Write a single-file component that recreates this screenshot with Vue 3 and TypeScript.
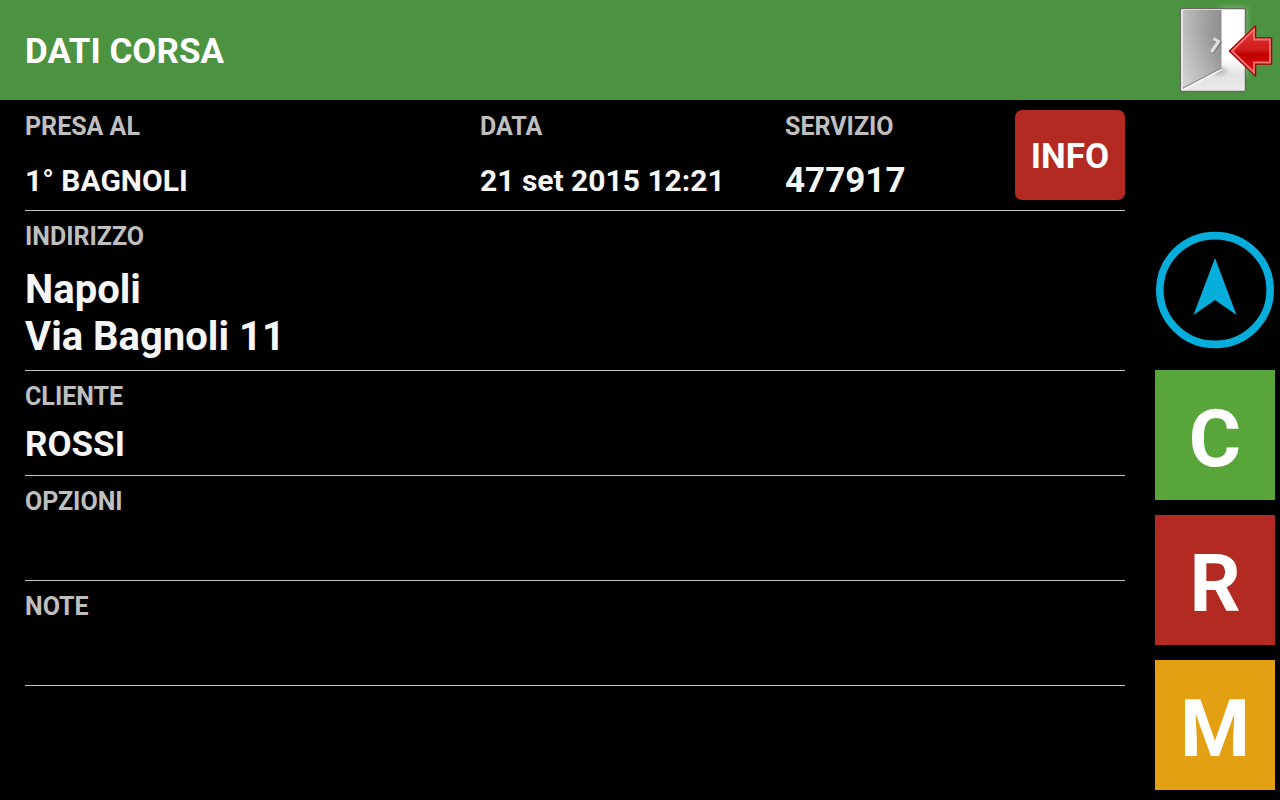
<script setup lang="ts">
interface Section {
  label: string
  lines: string[]
  large?: boolean
}

interface Action {
  letter: string
  tone: string
}

const sections: Section[] = [
  { label: 'INDIRIZZO', lines: ['Napoli', 'Via Bagnoli 11'], large: true },
  { label: 'CLIENTE', lines: ['ROSSI'] },
  { label: 'OPZIONI', lines: [] },
  { label: 'NOTE', lines: [] },
]

const actions: Action[] = [
  { letter: 'C', tone: 'green' },
  { letter: 'R', tone: 'red' },
  { letter: 'M', tone: 'amber' },
]
</script>

<template>
  <div class="screen">
    <header class="bar">
      <h1 class="title">DATI CORSA</h1>
      <button class="exit" type="button" aria-label="Esci">
        <svg width="110" height="100" viewBox="0 0 110 100" aria-hidden="true">
          <defs>
            <linearGradient id="panel" x1="0" y1="0" x2="1" y2="0.1">
              <stop offset="0" stop-color="#c0c0c0" />
              <stop offset="0.5" stop-color="#a6a6a6" />
              <stop offset="1" stop-color="#8e8e8e" />
            </linearGradient>
            <linearGradient id="panelLight" x1="0.6" y1="0" x2="0.4" y2="1">
              <stop offset="0.3" stop-color="#fff" stop-opacity="0" />
              <stop offset="1" stop-color="#fff" stop-opacity="0.35" />
            </linearGradient>
            <linearGradient id="floor" x1="0" y1="0" x2="0" y2="1">
              <stop offset="0.6" stop-color="#fff" />
              <stop offset="0.8" stop-color="#e2e2e2" />
              <stop offset="1" stop-color="#ececec" />
            </linearGradient>
            <radialGradient id="shade" cx="0.5" cy="0.5" r="0.5">
              <stop offset="0" stop-color="#8a8a8a" stop-opacity="0.75" />
              <stop offset="1" stop-color="#bbb" stop-opacity="0" />
            </radialGradient>
            <linearGradient id="arrow" x1="0" y1="0" x2="0" y2="1">
              <stop offset="0" stop-color="#e23a3a" />
              <stop offset="0.48" stop-color="#cf1c1c" />
              <stop offset="0.56" stop-color="#c00000" />
              <stop offset="1" stop-color="#e01414" />
            </linearGradient>
            <filter id="glow" x="-20%" y="-20%" width="140%" height="140%">
              <feGaussianBlur stdDeviation="2.5" />
            </filter>
          </defs>
          <rect x="50" y="7" width="27" height="70" fill="#d8f0d4" opacity="0.4" filter="url(#glow)" />
          <rect x="10.5" y="8.5" width="65" height="83" rx="1" fill="url(#floor)" stroke="#656b61" stroke-width="1.5" />
          <ellipse cx="48" cy="71" rx="13" ry="7" fill="url(#shade)" />
          <path d="M12 10H51.500V69L12 90Z" fill="url(#panel)" />
          <path d="M12 10H51.500V69L12 90Z" fill="url(#panelLight)" />
          <path d="M12 10V90" stroke="#ececec" stroke-width="1.500" />
          <path d="M13 90L51.500 69.500" stroke="#f8f8f8" stroke-width="1.500" />
          <path d="M13 88L51.500 68" stroke="#858585" stroke-width="1" />
          <path d="M42.500 53L50 43L44.500 40.500" fill="none" stroke="#777" stroke-width="2.500" />
          <path d="M41.500 52L48.500 41.500L43.500 38.500" fill="none" stroke="#dedede" stroke-width="3.200" stroke-linejoin="round" />
          <path d="M59.500 51L85.500 26V38H101.500V64H85.500V76Z" fill="url(#arrow)" stroke="#a40000" stroke-width="1.500" stroke-linejoin="round" />
          <path d="M62 51L84 29.500V39.500H100V62.500H84V72.500Z" fill="none" stroke="#ee7474" stroke-width="1.800" />
        </svg>
      </button>
    </header>

    <div class="body">
      <main class="details">
        <section class="row summary">
          <div class="field spaced">
            <h2 class="label">PRESA AL</h2>
            <p class="value small">1° BAGNOLI</p>
          </div>
          <div class="field spaced">
            <h2 class="label">DATA</h2>
            <p class="value small">21 set 2015 12:21</p>
          </div>
          <div class="field spaced">
            <h2 class="label">SERVIZIO</h2>
            <p class="value">477917</p>
          </div>
          <button class="info" type="button">INFO</button>
        </section>

        <section v-for="s in sections" :key="s.label" class="row field">
          <h2 class="label">{{ s.label }}</h2>
          <div class="lines">
            <p v-for="line in s.lines" :key="line" class="value" :class="{ large: s.large }">{{ line }}</p>
          </div>
        </section>
      </main>

      <nav class="actions">
        <button class="action compass" type="button" aria-label="Naviga">
          <svg width="120" height="130" viewBox="0 0 120 130" aria-hidden="true">
            <ellipse cx="60" cy="65" rx="55.200" ry="54.400" fill="none" stroke="#07aedb" stroke-width="7.600" />
            <path d="M60 33L81.500 90L60 75L38.500 90Z" fill="#07aedb" />
          </svg>
        </button>
        <button v-for="a in actions" :key="a.letter" class="action" :class="a.tone" type="button">
          {{ a.letter }}
        </button>
      </nav>
    </div>
  </div>
</template>

<style>
body {
  margin: 0;
  background: #000;
}
</style>

<style scoped>
.screen {
  display: flex;
  flex-direction: column;
  min-height: 100vh;
  background: #000;
  color: #f6f6f6;
  font-family: Roboto, "Liberation Sans", sans-serif;
  font-weight: 700;
}

h1,
h2,
p {
  margin: 0;
  font-weight: 700;
}

button {
  padding: 0;
  border: 0;
  background: none;
  color: #fff;
  font: inherit;
  cursor: pointer;
}

svg {
  display: block;
}

.bar {
  display: flex;
  align-items: center;
  justify-content: space-between;
  padding-left: 25px;
  background: #4c9341;
}

.title {
  padding-top: 4px;
  color: #fff;
  font-size: 35px;
  line-height: 40px;
}

.body {
  display: flex;
  flex: 1;
  gap: 30px;
  padding: 0 5px 10px 25px;
}

.details {
  flex: 1;
  min-width: 0;
  padding-top: 1px;
}

.row {
  box-sizing: border-box;
  min-height: 105px;
  padding: 10px 0;
  border-bottom: 1px solid #c4c4c4;
}

.summary {
  display: grid;
  grid-template-columns: 455fr 305fr 230fr 110px;
  align-items: start;
  min-height: 110px;
  padding: 9px 0;
}

.field {
  display: flex;
  flex-direction: column;
  gap: 13px;
}

.spaced {
  gap: 19px;
  padding-top: 1px;
}

.label {
  color: #bfbfbf;
  font-size: 25px;
  line-height: 32px;
}

.value {
  font-size: 35px;
  line-height: 38px;
}

.value.small {
  font-size: 30px;
}

.value.large {
  font-size: 40px;
  line-height: 47px;
}

.info {
  height: 90px;
  padding-top: 2px;
  border-radius: 7px;
  background: #b22a22;
  font-size: 35px;
}

.actions {
  display: flex;
  flex-direction: column;
  justify-content: flex-end;
  gap: 15px;
  width: 120px;
}

.action {
  box-sizing: border-box;
  height: 130px;
  padding-top: 8px;
  font-size: 80px;
  line-height: 94px;
}

.compass {
  padding-top: 0;
}

.green {
  background: #58a63a;
}

.red {
  background: #b22a22;
}

.amber {
  background: #e3a013;
}
</style>
